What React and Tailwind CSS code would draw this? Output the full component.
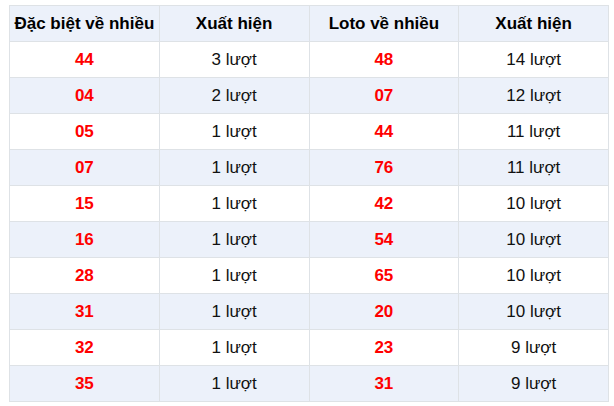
export default function App() {
  const rows = [
    ["44", "3 lượt", "48", "14 lượt"],
    ["04", "2 lượt", "07", "12 lượt"],
    ["05", "1 lượt", "44", "11 lượt"],
    ["07", "1 lượt", "76", "11 lượt"],
    ["15", "1 lượt", "42", "10 lượt"],
    ["16", "1 lượt", "54", "10 lượt"],
    ["28", "1 lượt", "65", "10 lượt"],
    ["31", "1 lượt", "20", "10 lượt"],
    ["32", "1 lượt", "23", "9 lượt"],
    ["35", "1 lượt", "31", "9 lượt"],
  ];
  const th = "border border-[#dee2e6] h-[36px] p-0 text-center font-bold text-[17px] text-black";
  const td = "border border-[#dee2e6] h-[36px] p-0 text-center text-[17px]";
  return (
    <div className="w-[614px] h-[406px] bg-white pt-[5px] pl-[9px]" style={{ fontFamily: '"Liberation Sans", Arial, sans-serif' }}>
      <table className="border-collapse w-[600px] table-fixed">
        <thead>
          <tr className="bg-[#ecf1fa]">
            <th className={th}>Đặc biệt về nhiều</th>
            <th className={th}>Xuất hiện</th>
            <th className={th}>Loto về nhiều</th>
            <th className={th}>Xuất hiện</th>
          </tr>
        </thead>
        <tbody>
          {rows.map((r, i) => (
            <tr key={i} className={i % 2 === 1 ? "bg-[#ecf1fa]" : "bg-white"}>
              <td className={td + " font-bold text-[#ff0000]"}>{r[0]}</td>
              <td className={td + " text-[#111]"}>{r[1]}</td>
              <td className={td + " font-bold text-[#ff0000]"}>{r[2]}</td>
              <td className={td + " text-[#111]"}>{r[3]}</td>
            </tr>
          ))}
        </tbody>
      </table>
    </div>
  );
}
